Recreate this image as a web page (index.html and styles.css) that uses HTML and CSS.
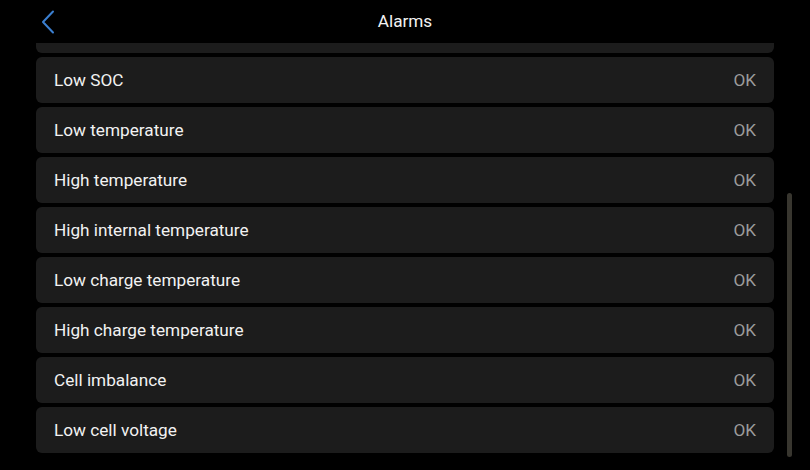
FILE: index.html
```html
<!DOCTYPE html>
<html>
<head>
<meta charset="utf-8">
<link rel="stylesheet" href="styles.css">
</head>
<body>
<div class="screen">
  <header class="header">
    <button class="back" aria-label="Back">
      <svg width="14" height="24" viewBox="0 0 14 24"><path d="M12 1.5 L2 12 L12 22.5" fill="none" stroke="#3b7fd0" stroke-width="2" stroke-linecap="round" stroke-linejoin="round"/></svg>
    </button>
    <h1 class="title">Alarms</h1>
  </header>
  <div class="viewport">
    <ul class="list">
      <li class="row"><span class="label">High voltage</span><span class="status">OK</span></li>
      <li class="row"><span class="label">Low SOC</span><span class="status">OK</span></li>
      <li class="row"><span class="label">Low temperature</span><span class="status">OK</span></li>
      <li class="row"><span class="label">High temperature</span><span class="status">OK</span></li>
      <li class="row"><span class="label">High internal temperature</span><span class="status">OK</span></li>
      <li class="row"><span class="label">Low charge temperature</span><span class="status">OK</span></li>
      <li class="row"><span class="label">High charge temperature</span><span class="status">OK</span></li>
      <li class="row"><span class="label">Cell imbalance</span><span class="status">OK</span></li>
      <li class="row"><span class="label">Low cell voltage</span><span class="status">OK</span></li>
    </ul>
    <div class="scrollbar"></div>
  </div>
</div>
</body>
</html>
```
FILE: styles.css
```css
* { box-sizing: border-box; }
html, body { margin: 0; padding: 0; background: #000; }
body { font-family: Roboto, "Noto Sans", sans-serif; color: #f2f2f2; }
.screen { width: 810px; height: 470px; background: #000; display: flex; flex-direction: column; overflow: hidden; }
.header { height: 43px; flex: none; position: relative; display: flex; align-items: center; justify-content: center; }
.back { position: absolute; left: 41px; top: 10px; background: none; border: 0; padding: 0; width: 14px; height: 24px; cursor: pointer; }
.back svg { display: block; }
.title { margin: 0; font-size: 17.2px; font-weight: 400; color: #f2f2f2; line-height: 1; }
.viewport { flex: 1; position: relative; overflow: hidden; }
.list { list-style: none; margin: -36px 0 0; padding: 0 36px; display: flex; flex-direction: column; gap: 4px; }
.row { height: 46px; background: #1c1c1c; border-radius: 6px; display: flex; align-items: center; justify-content: space-between; padding: 0 18px; font-size: 17.2px; }
.label { color: #f2f2f2; }
.status { color: #9b9b9b; }
.scrollbar { position: absolute; right: 18px; top: 150px; width: 5px; height: 264px; background: #38362f; border-radius: 3px; }
```
